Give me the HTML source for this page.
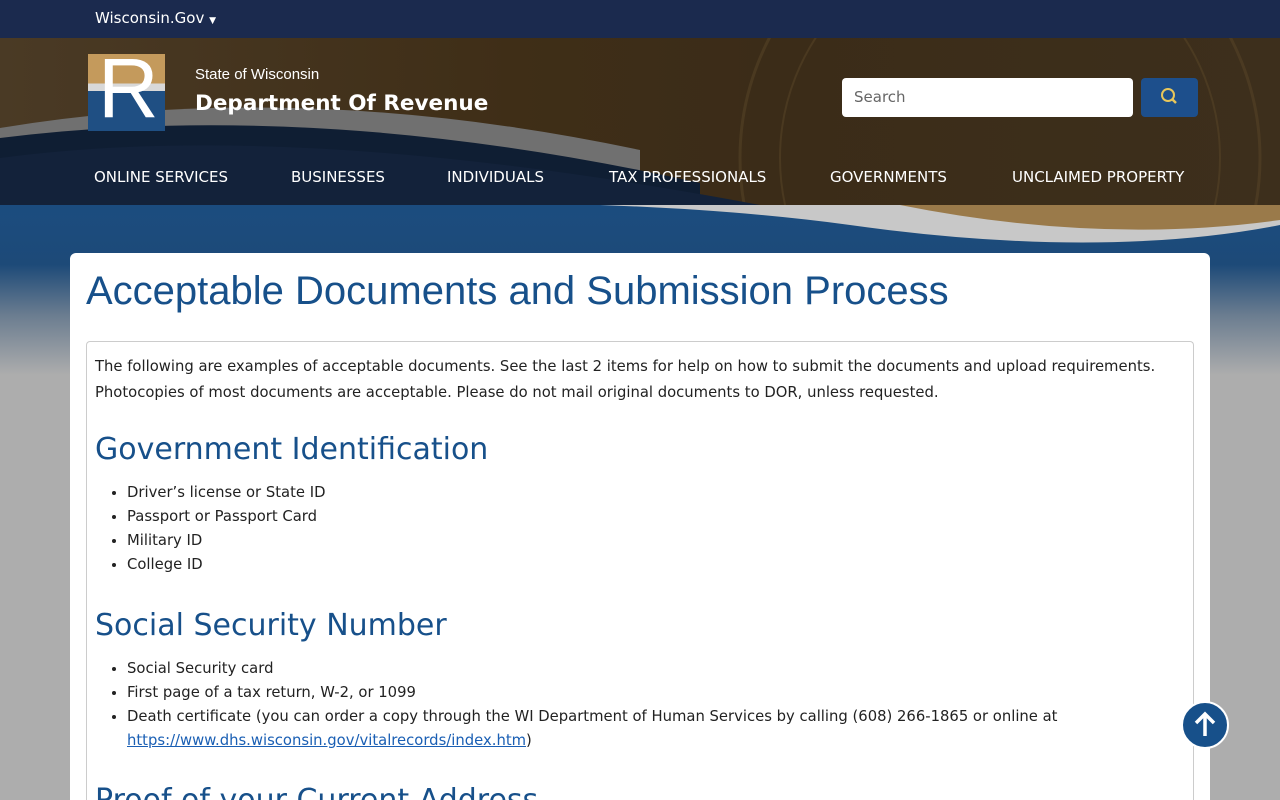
<!DOCTYPE html>
<html style="width:1280px;height:800px;overflow:hidden"><head><meta charset="utf-8">
<style>
*{margin:0;padding:0;box-sizing:border-box}
body{width:1280px;height:800px;overflow:hidden;background:#adadad;font-family:"DejaVu Sans","Liberation Sans",sans-serif;position:relative}
.top{position:absolute;left:0;top:0;width:1280px;height:38px;background:#1b2a4e;color:#fff}
.top span{position:absolute;left:95px;top:9px;font-size:15px}
.hdr{position:absolute;left:0;top:38px;width:1280px;height:167px;background:linear-gradient(90deg,#4a3a25 0%,#3f2e17 40%,#3b2c18 60%,#3d2f1c 100%);overflow:hidden}
.bg2{position:absolute;left:0;top:205px;width:1280px;height:170px;background:linear-gradient(180deg,#1b4c7f 0%,#1d4a78 35%,#6b7d90 65%,#adadad 100%)}
.nav{position:absolute;left:0;top:150px;width:1280px;height:55px;color:#fff;font-size:15px}
.nav span{position:absolute;top:18px}
.card{position:absolute;left:70px;top:253px;width:1140px;height:547px;background:#fff;border-radius:6px 6px 0 0;overflow:hidden}
h1{position:absolute;left:16px;top:16px;font-family:"Liberation Sans",Arial,sans-serif;font-weight:normal;font-size:40px;color:#17508a}
.box{position:absolute;left:16px;top:88px;width:1108px;height:459px;border:1px solid #ccc;border-bottom:none;border-radius:4px 4px 0 0;color:#222;font-size:14.8px;padding:12px 8px;overflow:hidden}
.box p{line-height:26px}
h2{font-weight:normal;color:#17508a;font-size:30px;margin:26px 0 13px;line-height:1.2;white-space:nowrap}
ul{margin-left:32px;line-height:24px}
a{color:#1a5fb4;text-decoration:underline}
.up{position:absolute;left:1181px;top:701px;width:48px;height:48px;border-radius:50%;background:#17508a;border:2px solid #fff}
</style></head><body>
<div class="top"><span>Wisconsin.Gov <span style="position:static;font-size:9px">▼</span></span></div>
<div class="hdr">
<svg width="1280" height="167" style="position:absolute;left:0;top:0">
<circle cx="1000" cy="120" r="260" fill="none" stroke="#5a4628" stroke-width="3" opacity=".5"/>
<circle cx="1000" cy="120" r="220" fill="none" stroke="#5a4628" stroke-width="2" opacity=".5"/>
<path d="M0 90 Q300 40 640 112 L640 167 L0 167Z" fill="#707070"/>
<path d="M0 100 Q320 60 700 145 L700 167 L0 167Z" fill="#0f1e33"/>
<path d="M0 120 Q300 80 760 167 L0 167Z" fill="#13223a"/>
</svg>
<div style="position:absolute;left:88px;top:16px;width:77px;height:77px;background:linear-gradient(180deg,#c49a5c 0 38%,#d8d8d8 38% 48%,#1f4f83 48%)"><span style="position:absolute;left:10px;top:-8px;color:#fff;font-family:'Liberation Sans',sans-serif;font-size:84px;line-height:1">R</span></div>
<div style="position:absolute;left:195px;top:28px;color:#fff;font-size:15px;font-family:'Liberation Sans',sans-serif">State of Wisconsin</div>
<div style="position:absolute;left:195px;top:53px;color:#fff;font-size:21.5px;font-weight:bold">Department Of Revenue</div>
<div style="position:absolute;left:842px;top:40px;width:291px;height:39px;background:#fff;border-radius:4px;color:#666;font-size:15px;padding:10px 12px">Search</div>
<div style="position:absolute;left:1141px;top:40px;width:57px;height:39px;background:#1d4f8c;border-radius:4px">
<svg width="57" height="39"><circle cx="27" cy="17" r="6" fill="none" stroke="#e8c65a" stroke-width="2"/><path d="M31 21 L35 25" stroke="#e8c65a" stroke-width="2.5"/></svg></div>
</div>
<div class="bg2"><svg width="1280" height="60" style="position:absolute;top:0;left:0"><path d="M600 0 L1280 0 L1280 20 Q1100 55 850 20 Q740 5 600 0Z" fill="#c8c8c8"/><path d="M900 0 L1280 0 L1280 15 Q1100 40 900 0Z" fill="#9a7a4a"/></svg></div>
<div class="nav"><span style="left:94px">ONLINE SERVICES</span><span style="left:291px">BUSINESSES</span><span style="left:447px">INDIVIDUALS</span><span style="left:609px">TAX PROFESSIONALS</span><span style="left:830px">GOVERNMENTS</span><span style="left:1012px">UNCLAIMED PROPERTY</span></div>
<div class="card">
<h1>Acceptable Documents and Submission Process</h1>
<div class="box">
<p>The following are examples of acceptable documents. See the last 2 items for help on how to submit the documents and upload requirements. Photocopies of most documents are acceptable. Please do not mail original documents to DOR, unless requested.</p>
<h2>Government Identification</h2>
<ul><li>Driver’s license or State ID</li><li>Passport or Passport Card</li><li>Military ID</li><li>College ID</li></ul>
<h2 style="margin-top:31px">Social Security Number</h2>
<ul><li>Social Security card</li><li>First page of a tax return, W-2, or 1099</li><li>Death certificate (you can order a copy through the WI Department of Human Services by calling (608) 266-1865 or online at <a>https://www.dhs.wisconsin.gov/vitalrecords/index.htm</a>)</li></ul>
<h2 style="margin-top:30px">Proof of your Current Address</h2>
</div></div>
<div class="up"><svg width="44" height="44"><path d="M22 33 V12 M13 20 L22 11 L31 20" stroke="#fff" stroke-width="3.5" fill="none"/></svg></div>
</body></html>
